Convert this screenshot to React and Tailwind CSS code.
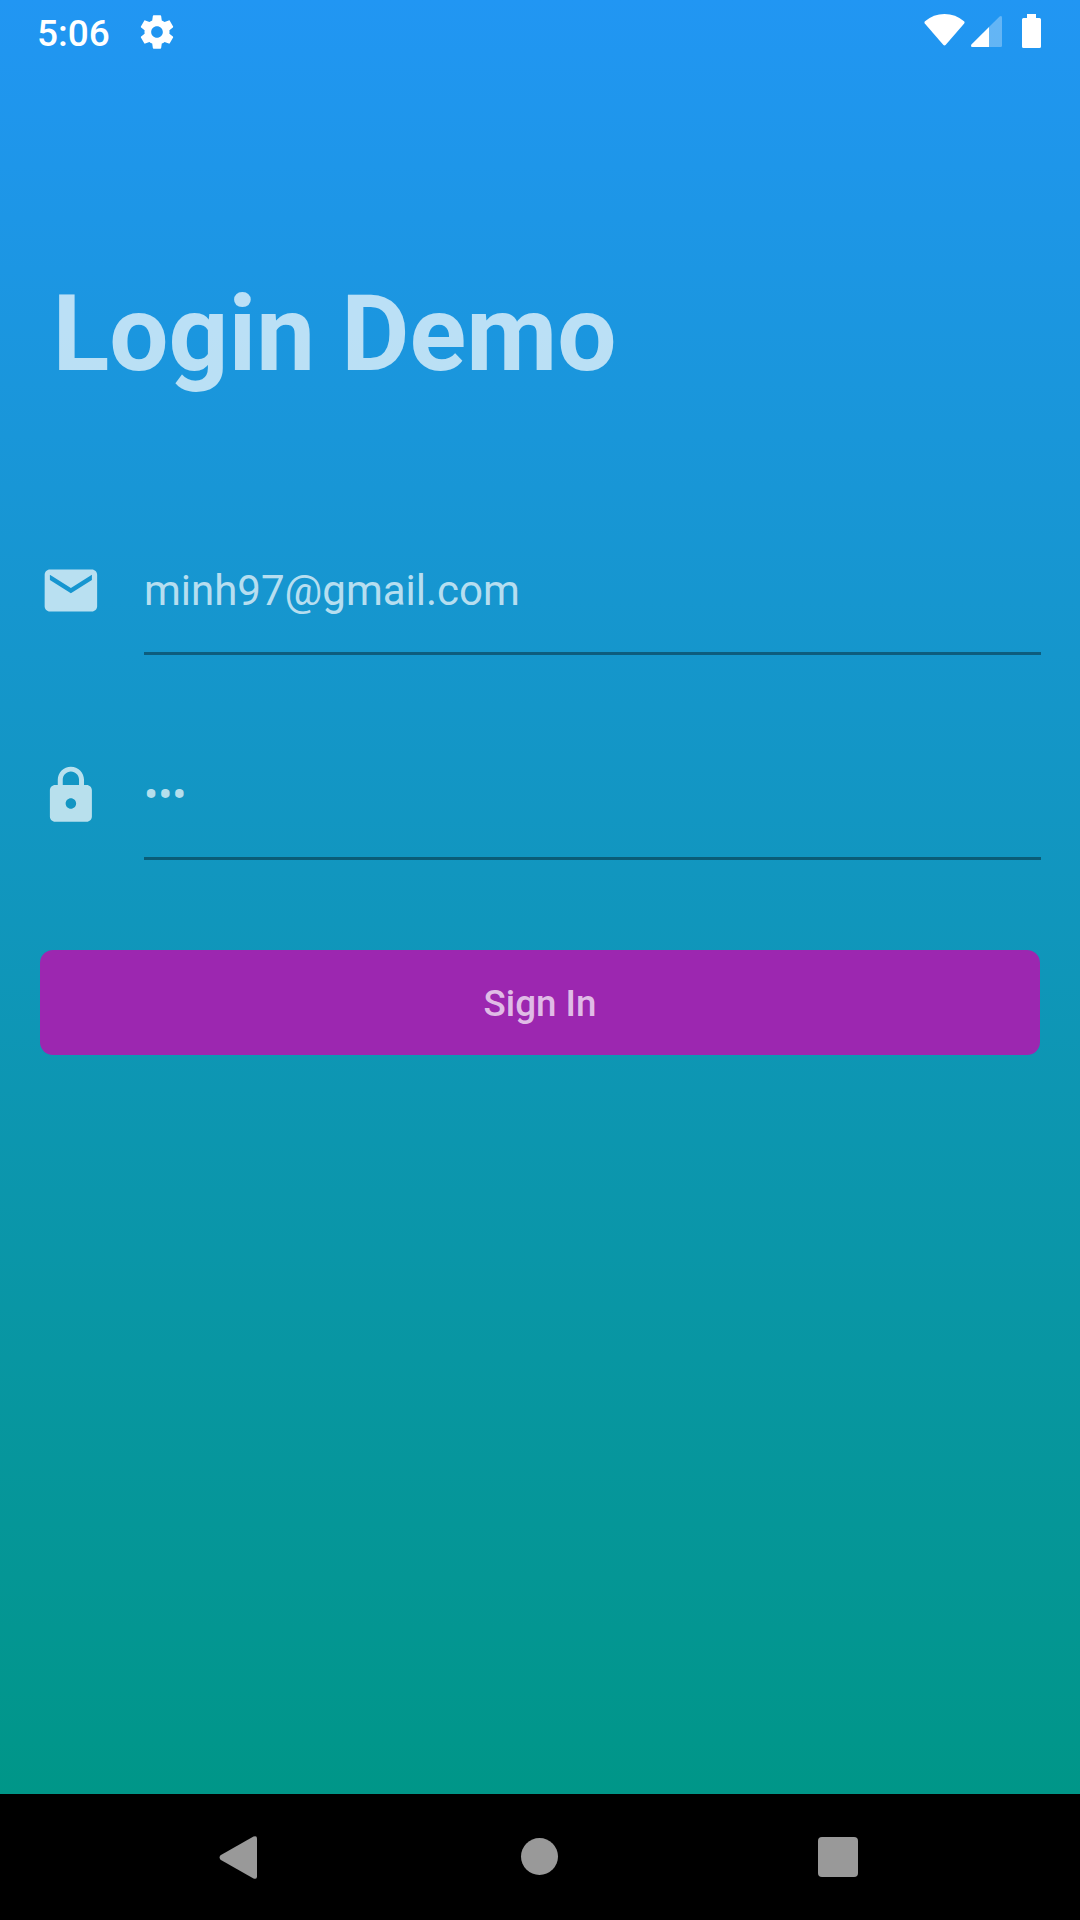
import React from "react";

function StatusBar() {
  return (
    <header className="flex h-[63px] items-start pl-[37px] pr-[39px] text-white">
      <span className="mt-[12px] text-[37px] leading-[43px] font-medium">5:06</span>
      <svg className="mt-[12px] ml-[27px] size-[40px]" viewBox="0 0 24 24" fill="currentColor">
        <path d="M19.43 12.98c.04-.32.07-.64.07-.98s-.03-.66-.07-.98l2.11-1.65c.19-.15.24-.42.12-.64l-2-3.46c-.12-.22-.39-.3-.61-.22l-2.49 1c-.52-.4-1.08-.73-1.69-.98l-.38-2.65C14.46 2.18 14.25 2 14 2h-4c-.25 0-.46.18-.49.42l-.38 2.65c-.61.25-1.17.59-1.69.98l-2.49-1c-.23-.09-.49 0-.61.22l-2 3.46c-.13.22-.07.49.12.64l2.11 1.65c-.04.32-.07.65-.07.98s.03.66.07.98l-2.11 1.65c-.19.15-.24.42-.12.64l2 3.46c.12.22.39.3.61.22l2.49-1c.52.4 1.08.73 1.69.98l.38 2.65c.03.24.24.42.49.42h4c.25 0 .46-.18.49-.42l.38-2.65c.61-.25 1.17-.59 1.69-.98l2.49 1c.23.09.49 0 .61-.22l2-3.46c.12-.22.07-.49-.12-.64l-2.11-1.65zM12 15.5c-1.93 0-3.5-1.57-3.5-3.5s1.57-3.5 3.5-3.5 3.5 1.57 3.5 3.5-1.57 3.5-3.5 3.5z" />
      </svg>
      <div className="mt-[14px] ml-auto flex items-start">
        <svg className="h-[32px] w-[41px]" viewBox="0 0 41 32" fill="currentColor">
          <path d="M1 7.3Q9.5 0 20.5 0T40 7.3Q41 8.3 40.2 9.5L21.8 30.8Q20.5 32.2 19.2 30.8L.8 9.5Q0 8.3 1 7.3Z" />
        </svg>
        <svg className="mt-[2px] ml-[6px] h-[31px] w-[31px]" viewBox="0 0 31 31" fill="currentColor">
          <path d="M18 11V31H1.3Q-.7 31 .4 28.6Z" />
          <path d="M18 11 28.6.5Q31-.8 31 1.6V29.7Q31 31 29.7 31H18Z" opacity=".3" />
        </svg>
        <svg className="ml-[20px] h-[34px] w-[19px]" viewBox="0 0 19 34" fill="currentColor">
          <path d="M5 0H14V4H17.5Q19 4 19 5.5V32.4Q19 34 17.5 34H1.5Q0 34 0 32.4V5.5Q0 4 1.5 4H5Z" />
        </svg>
      </div>
    </header>
  );
}

function Field({ icon, children }) {
  return (
    <div className="flex h-[126px] items-start">
      <svg className="mt-[30px] size-[63px] shrink-0 text-white/70" viewBox="-0.15 0 24 24" fill="currentColor">
        <path d={icon} />
      </svg>
      <div className="ml-[42px] flex h-full flex-1 flex-col justify-between pt-[37px] text-[42px] leading-[49px] text-white/70">
        {children}
        <div className="h-[3px] bg-black/38" />
      </div>
    </div>
  );
}

const MAIL =
  "M20 4H4c-1.1 0-1.99.9-1.99 2L2 18c0 1.1.9 2 2 2h16c1.1 0 2-.9 2-2V6c0-1.1-.9-2-2-2zm0 4l-8 5-8-5V6l8 5 8-5v2z";
const LOCK =
  "M18 8h-1V6c0-2.76-2.24-5-5-5S7 3.24 7 6v2H6c-1.1 0-2 .9-2 2v10c0 1.1.9 2 2 2h12c1.1 0 2-.9 2-2V10c0-1.1-.9-2-2-2zm-6 9c-1.1 0-2-.9-2-2s.9-2 2-2 2 .9 2 2-.9 2-2 2zm3.1-9H8.9V6c0-1.71 1.39-3.1 3.1-3.1 1.71 0 3.1 1.39 3.1 3.1v2z";

function NavBar() {
  return (
    <nav className="flex h-[126px] items-center justify-between bg-black pr-[222px] pl-[219px] text-[#999999]">
      <svg className="h-[43px] w-[38px]" viewBox="0 0 38 43" fill="currentColor">
        <path d="M1.5 19.3 34.5.6Q38-.8 38 2.4V40.6Q38 43.8 34.5 42.4L1.5 23.7Q-.3 21.5 1.5 19.3Z" />
      </svg>
      <span className="mb-[1px] ml-[4px] size-[37px] rounded-full bg-[#999999]" />
      <span className="size-[40px] rounded-[4px] bg-[#999999]" />
    </nav>
  );
}

export default function App() {
  return (
    <div className="flex h-[1920px] w-[1080px] flex-col overflow-hidden bg-black font-['Roboto',sans-serif]">
      <div className="flex flex-1 flex-col bg-[linear-gradient(to_bottom,#2196f3,#009688)]">
        <StatusBar />
        <main className="px-[39px]">
          <h1 className="mt-[210px] ml-[13.5px] text-[105px] leading-[123px] font-bold text-white/70">Login Demo</h1>
          <div className="mt-[133px]">
            <Field icon={MAIL}>minh97@gmail.com</Field>
          </div>
          <div className="mt-[79px]">
            <Field icon={LOCK}>
              <span className="-mt-px">•••</span>
            </Field>
          </div>
          <div className="mt-[90px] px-px">
            <button className="flex h-[105px] w-full items-center justify-center rounded-[13px] bg-[#9c27b0] pt-[2px] text-[36.75px] font-medium text-white/70">
              Sign In
            </button>
          </div>
        </main>
      </div>
      <NavBar />
    </div>
  );
}
